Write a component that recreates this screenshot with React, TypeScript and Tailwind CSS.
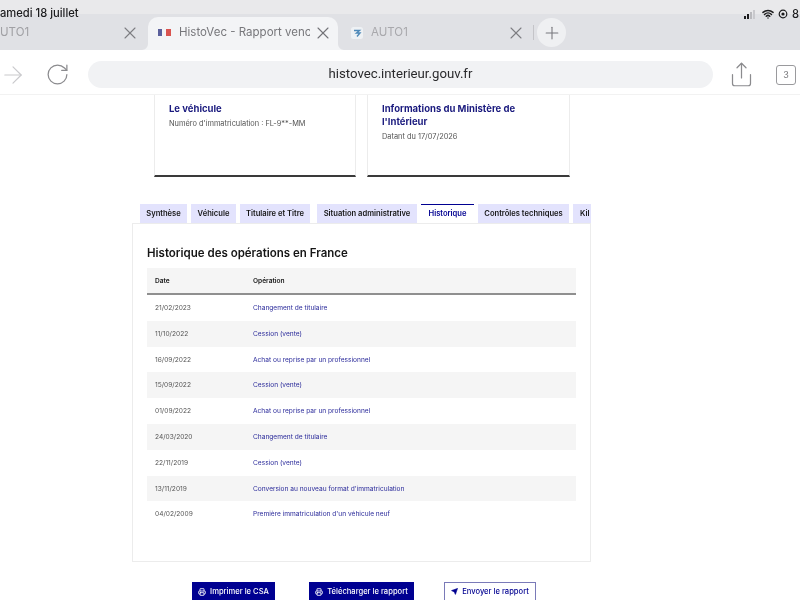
import React from "react";
import { ArrowRight, Plus, RotateCw, Send, Share, Wifi, X, Printer } from "lucide-react";

const rows = [
  ["21/02/2023", "Changement de titulaire"],
  ["11/10/2022", "Cession (vente)"],
  ["16/09/2022", "Achat ou reprise par un professionnel"],
  ["15/09/2022", "Cession (vente)"],
  ["01/09/2022", "Achat ou reprise par un professionnel"],
  ["24/03/2020", "Changement de titulaire"],
  ["22/11/2019", "Cession (vente)"],
  ["13/11/2019", "Conversion au nouveau format d'immatriculation"],
  ["04/02/2009", "Première immatriculation d'un véhicule neuf"],
];

function Card({ children, cls }: { children: React.ReactNode; cls: string }) {
  return (
    <div className={`h-[82px] border-x border-[#ececec] border-b-2 border-b-[#3a3a3a] px-[14px] pt-[7px] ${cls}`}>
      {children}
    </div>
  );
}

const tabCls =
  "shrink-0 bg-[#e3e3fd] flex items-center justify-center text-[7.6px] font-semibold text-[#161616] whitespace-nowrap";

export default function App() {
  return (
    <div className="relative w-[800px] h-[600px] overflow-hidden bg-white antialiased blur-[0.35px] font-['Inter','Liberation_Sans',sans-serif]">
      <div className="absolute left-0 top-[6px] text-[11.2px] leading-[14px] font-medium text-[#1c1c1e] whitespace-nowrap">
        amedi 18 juillet
      </div>
      <div className="absolute left-[744px] top-[7px] flex items-center text-[#1c1c1e]">
        <div className="flex items-end gap-[1px] h-[9px] w-[15px]">
          <span className="w-[2px] h-[3px] bg-[#1c1c1e]" />
          <span className="w-[2px] h-[5px] bg-[#1c1c1e]" />
          <span className="w-[2px] h-[7px] bg-[#b9b9bd]" />
          <span className="w-[2px] h-[9px] bg-[#c9c9cd]" />
        </div>
        <Wifi size={12} strokeWidth={3} className="ml-[3px]" />
        <svg width="10" height="10" viewBox="0 0 10 10" className="ml-[4px]">
          <circle cx="5" cy="5" r="3.8" fill="none" stroke="#1c1c1e" strokeWidth="1.2" />
          <circle cx="5" cy="5" r="1.6" fill="#1c1c1e" />
        </svg>
        <span className="ml-[4px] text-[11.2px] leading-[14px] font-medium">8:</span>
      </div>

      <header className="h-[50px] bg-[#e0e1e5] flex flex-col">
        <div className="h-[14px] bg-[#e9e9eb]" />
        <div className="flex-1 flex items-end">
          <div className="w-[148px] h-[33px] flex items-center justify-between pr-[8px] pb-[2px] text-[#a0a0a4] text-[11.5px]">
            <span>UTO1</span>
            <X size={20} strokeWidth={1.3} className="text-[#7d7d82]" />
          </div>
          <div className="relative w-[190px] h-[33px] bg-[#f3f4f6] rounded-t-[10px] flex items-center pl-[10px] pr-[5px] pb-[2px]">
            <svg width="6" height="6" viewBox="0 0 6 6" className="absolute -left-[6px] bottom-0">
              <path d="M6 0 V6 H0 C3 6 6 3 6 0 Z" fill="#f3f4f6" />
            </svg>
            <svg width="6" height="6" viewBox="0 0 6 6" className="absolute -right-[6px] bottom-0">
              <path d="M0 0 V6 H6 C3 6 0 3 0 0 Z" fill="#f3f4f6" />
            </svg>
            <div className="flex w-[13px] h-[7px] shrink-0">
              <span className="w-[4px] bg-[#5a5f9c]" />
              <span className="w-[4px] bg-[#f3f4f6]" />
              <span className="w-[5px] bg-[#d9534f]" />
            </div>
            <span className="ml-[8px] flex-1 overflow-hidden whitespace-nowrap text-[11.5px] text-[#77777b]">
              HistoVec - Rapport venc
            </span>
            <X size={20} strokeWidth={1.3} className="ml-[3px] text-[#737378] shrink-0" />
          </div>
          <div className="w-[195px] h-[33px] flex items-center pl-[13px] pr-[7px] pb-[2px] text-[#a8a8ac] text-[11.5px]">
            <svg width="12" height="12" viewBox="0 0 12 12" className="shrink-0">
              <rect width="12" height="12" rx="2.5" fill="#eef1f4" />
              <path d="M3 3.5 H8.5 L5.5 6 H9 L6 9.5" fill="none" stroke="#4d88b8" strokeWidth="1.4" />
            </svg>
            <span className="ml-[8px] flex-1">AUTO1</span>
            <X size={20} strokeWidth={1.3} className="text-[#7d7d82]" />
          </div>
          <div className="h-[33px] flex items-center pb-[2px]">
            <div className="w-px h-[15px] bg-[#c4c4c8]" />
            <div className="ml-[3px] w-[29px] h-[29px] rounded-full bg-[#eff0f2] flex items-center justify-center">
              <Plus size={20} strokeWidth={1.3} className="text-[#77777c]" />
            </div>
          </div>
        </div>
      </header>

      <div className="h-[45px] border-b border-[#f2f2f2] pt-[5px] flex items-center">
        <ArrowRight size={28} strokeWidth={1} className="-ml-[1px] text-[#c9c9cc]" />
        <RotateCw size={25} strokeWidth={1.2} className="ml-[18px] text-[#8b8b8e]" />
        <div className="ml-[18px] w-[625px] h-[27px] pb-[1px] rounded-full bg-[#f1f2f4] flex items-center justify-center font-['Roboto',sans-serif] text-[13.2px] text-[#2a2a2c]">
          histovec.interieur.gouv.fr
        </div>
        <Share size={27} strokeWidth={1.1} className="ml-[15px] text-[#8b8b8e]" />
        <div className="ml-[21px] w-[20px] h-[20px] border border-[#9a9a9d] rounded-[3px] flex items-center justify-center text-[9px] text-[#77777a]">
          3
        </div>
      </div>

      <main className="pl-[132px]">
        <div className="pl-[22px] flex gap-[11px]">
          <Card cls="w-[202px]">
            <div className="text-[9.5px] leading-[13px] font-bold text-[#1a1a7e]">Le véhicule</div>
            <div className="mt-[3px] text-[7.4px] leading-[12px] text-[#555]">Numéro d'immatriculation : FL-9**-MM</div>
          </Card>
          <Card cls="w-[203px]">
            <div className="text-[9.5px] leading-[13px] font-bold text-[#1a1a7e]">
              Informations du Ministère de
              <br />
              l'Intérieur
            </div>
            <div className="mt-[3px] text-[7.4px] leading-[12px] text-[#555]">Datant du 17/07/2026</div>
          </Card>
        </div>

        <div className="mt-[27px] pl-[8px] w-[459px] flex h-[19px] overflow-hidden">
          <div className={`${tabCls} w-[47px]`}>Synthèse</div>
          <div className={`${tabCls} w-[45px] ml-[4px]`}>Véhicule</div>
          <div className={`${tabCls} w-[70px] ml-[4px]`}>Titulaire et Titre</div>
          <div className={`${tabCls} w-[100px] ml-[7px]`}>Situation administrative</div>
          <div className="w-[53px] ml-[4px] shrink-0 bg-white border-t-[1.5px] border-[#000091] flex items-center justify-center text-[7.6px] font-semibold text-[#000091]">
            Historique
          </div>
          <div className={`${tabCls} w-[91px] ml-[4px]`}>Contrôles techniques</div>
          <div className="w-[18px] ml-[4px] shrink-0 bg-[#e3e3fd] pl-[7px] overflow-hidden flex items-center text-[7.6px] font-semibold text-[#161616]">
            Kil
          </div>
        </div>

        <section className="w-[459px] h-[339px] border border-[#ececec] px-[14px] pt-[21px]">
          <h2 className="text-[11.5px] leading-[16px] font-semibold text-[#161616]">Historique des opérations en France</h2>
          <div className="mt-[7px] w-[429px]">
            <div className="h-[27px] pt-[2px] bg-[#f5f5f5] border-b-2 border-b-[#8f8f8f] flex items-center pl-[8px] text-[6.6px] font-semibold text-[#161616]">
              <span className="w-[98px]">Date</span>
              <span>Opération</span>
            </div>
            {rows.map((r, i) => (
              <div key={r[0]} className={`h-[25.8px] pt-[2px] flex items-center pl-[8px] text-[6.6px] ${i % 2 === 1 ? "bg-[#f5f5f5]" : "bg-white"}`}>
                <span className="w-[98px] text-[#555]">{r[0]}</span>
                <span className="text-[#2a2a9a]">{r[1]}</span>
              </div>
            ))}
          </div>
        </section>

        <div className="mt-[20px] pl-[60px] flex items-start">
          <button className="w-[83px] h-[22px] pb-[3px] bg-[#000091] text-white text-[7.6px] font-medium flex items-center justify-center gap-[4px]">
            <Printer size={8} strokeWidth={2.5} /> Imprimer le CSA
          </button>
          <button className="ml-[34px] w-[105px] h-[22px] pb-[3px] bg-[#000091] text-white text-[7.6px] font-medium flex items-center justify-center gap-[4px]">
            <Printer size={8} strokeWidth={2.5} /> Télécharger le rapport
          </button>
          <button className="ml-[30px] w-[92px] h-[22px] pb-[3px] bg-white border border-[#7a7ab8] text-[#000091] text-[7.6px] font-medium flex items-center justify-center gap-[4px]">
            <Send size={7} fill="#000091" /> Envoyer le rapport
          </button>
        </div>
      </main>
    </div>
  );
}
